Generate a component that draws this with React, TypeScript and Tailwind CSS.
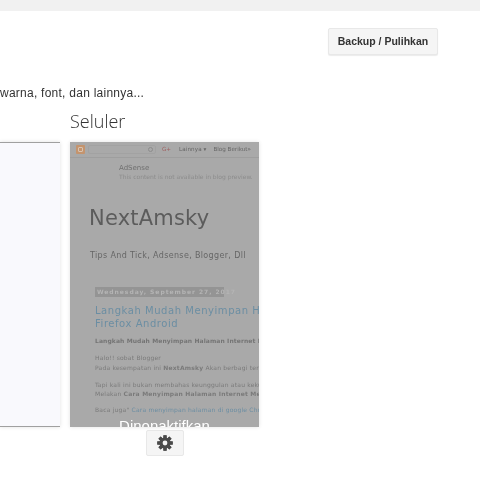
import React from "react";

const sans = "font-['Liberation_Sans',Arial,sans-serif]";
const deja = "font-['DejaVu_Sans',sans-serif]";

function Gear() {
  const teeth = [0, 45, 90, 135, 180, 225, 270, 315];
  return (
    <svg width="16" height="16" viewBox="0 0 16 16">
      {teeth.map((a) => (
        <rect key={a} x="6.4" y="0.3" width="3.2" height="15.4" fill="#4a4a4a" transform={`rotate(${a} 8 8)`} />
      ))}
      <circle cx="8" cy="8" r="5.6" fill="#4a4a4a" />
      <circle cx="8" cy="8" r="2.4" fill="#f3f3f3" />
    </svg>
  );
}

function MobilePreview() {
  return (
    <div className={`relative w-[189px] h-[285px] overflow-hidden bg-[#a9a9a9] shadow-[0_0_4px_rgba(0,0,0,0.12)] ${deja}`}>
      <div className="blur-[0.3px]">
        <div className="h-[16px] flex items-center border-b border-[#9e9e9e] pl-[6px] text-[5.6px] text-[#666]">
          <div className="w-[9px] h-[9px] rounded-[1px] bg-[#c4946e] flex items-center justify-center">
            <div className="w-[5px] h-[5px] rounded-[1px] border border-[#d8c4b2]" />
          </div>
          <div className="ml-[3px] w-[68px] h-[9px] rounded-[2px] border border-[#a2a2a2] flex justify-end items-center pr-[2px]">
            <div className="w-[5px] h-[5px] rounded-full border border-[#8c8c8c]" />
          </div>
          <span className="ml-[6px] text-[#a06060]">G+</span>
          <span className="ml-[8px] tracking-[0.1px]">Lainnya ▾</span>
          <span className="ml-[7px] whitespace-nowrap">Blog Berikut»</span>
        </div>
        <div className="pl-[49px] pt-[6px] text-[7px] leading-[9px] text-[#707070]">AdSense</div>
        <div className="pl-[49px] text-[6px] leading-[8px] text-[#8c8c8c] whitespace-nowrap">This content is not available in blog preview.</div>
        <div className="pl-[19px] pt-[24px] text-[21px] leading-[26px] text-[#5c5c5c] tracking-[0.2px]">NextAmsky</div>
        <div className="pl-[20px] pt-[20px] text-[8px] leading-[10px] text-[#666] tracking-[0.35px] whitespace-nowrap">Tips And Tick, Adsense, Blogger, Dll</div>
        <div className="pl-[25px] pt-[16px] whitespace-nowrap overflow-hidden">
          <div className="inline-block w-[129px] h-[10px] bg-[#949494] text-[6px] font-bold leading-[10px] text-[#b4b4b4] pl-[2px] tracking-[0.95px]">Wednesday, September 27, 2017</div>
          <div className="pt-[3px] text-[10px] leading-[13px] text-[#6b8ea3] tracking-[0.55px]">Langkah Mudah Menyimpan Halaman</div>
          <div className="text-[10px] leading-[13px] text-[#6b8ea3] tracking-[0.55px]">Firefox Android</div>
          <div className="pt-[6px] text-[6px] font-bold leading-[9px] text-[#747474] tracking-[0.1px]">Langkah Mudah Menyimpan Halaman Internet Menggunakan</div>
          <div className="pt-[8px] text-[6px] leading-[9px] text-[#7a7a7a] tracking-[0.2px]">Halo!! sobat Blogger</div>
          <div className="pt-[1px] text-[6px] leading-[9px] text-[#7a7a7a] tracking-[0.2px]">Pada kesempatan ini <b>NextAmsky</b> Akan berbagi tentang</div>
          <div className="pt-[8px] text-[6px] leading-[9px] text-[#7a7a7a] tracking-[0.2px]">Tapi kali ini bukan membahas keunggulan atau kekurangan</div>
          <div className="text-[6px] leading-[9px] text-[#7a7a7a] tracking-[0.2px]">Melakan <b>Cara Menyimpan Halaman Internet Menggunakan</b></div>
          <div className="pt-[7px] text-[6px] leading-[9px] text-[#7a7a7a] tracking-[0.2px]">Baca juga" <span className="text-[#6b8ea3]">Cara menyimpan halaman di google Chrome</span></div>
        </div>
      </div>
      <div className={`absolute left-0 right-0 top-[274px] text-center text-[15px] leading-[20px] text-white ${sans}`}>Dinonaktifkan</div>
    </div>
  );
}

export default function App() {
  return (
    <div className={`w-[480px] h-[480px] overflow-hidden bg-white blur-[0.3px] ${sans}`}>
      <div className="h-[11px] bg-[#f1f1f1]" />
      <div className="flex justify-end pt-[17px] pr-[42px]">
        <button className="w-[110px] h-[27px] rounded-[2px] border border-[#e8e8e8] bg-[#f5f5f5] shadow-[0_1px_1px_rgba(0,0,0,0.08)] text-[10.5px] font-bold text-[#333] text-center">Backup / Pulihkan</button>
      </div>
      <div className="pt-[31px] text-[12px] tracking-[0.25px] leading-[14px] text-[#333] whitespace-nowrap">warna, font, dan lainnya...</div>
      <div className="pl-[70px] pt-[9px] font-['Open_Sans',sans-serif] text-[18px] font-light leading-[24px] text-[#333]">Seluler</div>
      <div className="flex gap-[10px] pt-[9px]">
        <div className="w-[60px] h-[285px] bg-[#f9f9fd] border-t border-b border-[#a0a0a0] shadow-[0_0_4px_rgba(0,0,0,0.12)]" />
        <div className="flex flex-col">
          <MobilePreview />
          <div className="flex justify-center pt-[3px]">
            <button className="w-[38px] h-[26px] flex items-center justify-center rounded-[2px] border border-[#e8e8e8] bg-[#f5f5f5]">
              <Gear />
            </button>
          </div>
        </div>
      </div>
    </div>
  );
}
